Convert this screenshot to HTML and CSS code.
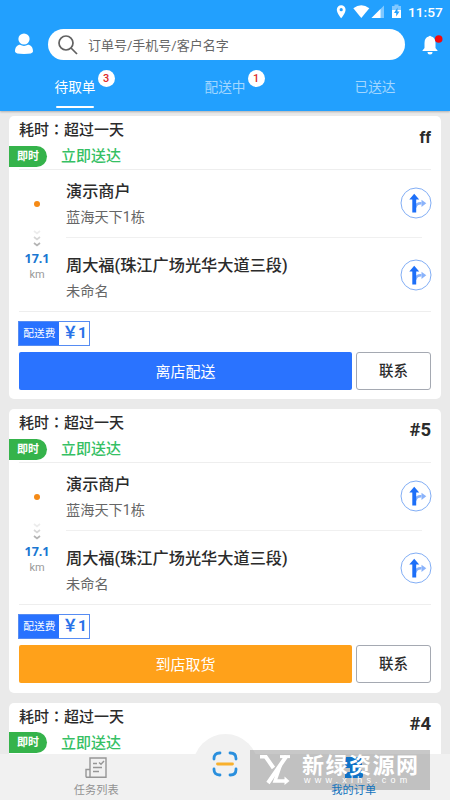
FILE: index.html
```html
<!DOCTYPE html>
<html lang="zh-CN">
<head>
<meta charset="utf-8">
<title>我的订单</title>
<link rel="stylesheet" href="styles.css">
</head>
<body>
<svg class="defs" width="0" height="0">
  <symbol id="turn" viewBox="0 0 32 32">
    <circle cx="16" cy="16" r="15" fill="#fff" stroke="#82aef5" stroke-width="1"/>
    <path d="M15 20.500C16 17.500 18 16 21.500 16.200" fill="none" stroke="#8ab3fb" stroke-width="2.600"/>
    <path d="M21.500 12.800L26.300 16.300L21.500 20Z" fill="#8ab3fb"/>
    <path d="M14.200 6.700L19.200 12.500H16.200V25.500H12.300V12.500H9.300Z" fill="#1d6ff8"/>
  </symbol>
  <symbol id="down" viewBox="0 0 8 18">
    <g fill="none" stroke-width="1.700">
      <path d="M1 1L4 3.500L7 1" stroke="#ececec"/>
      <path d="M1 7L4 9.500L7 7" stroke="#d6d6d6"/>
      <path d="M1 13L4 15.500L7 13" stroke="#b4b4b4"/>
    </g>
  </symbol>
</svg>
<div class="app">
  <header class="header">
    <div class="status">
      <svg width="68" height="16" viewBox="0 0 68 16">
        <path d="M5.200 1.300a4.400 4.400 0 0 0-4.400 4.400c0 3.300 4.400 8.500 4.400 8.500s4.400-5.200 4.400-8.500a4.400 4.400 0 0 0-4.400-4.400zm0 2.800a1.600 1.600 0 1 1 0 3.200a1.600 1.600 0 0 1 0-3.200z" fill="#fff"/>
        <path d="M17.300 4.300Q25.300-1.700 33.300 4.300L25.300 14Z" fill="#fff"/>
        <path d="M35.500 14L48 1.500V14Z" fill="#80c8ff"/><path d="M35.500 14L44.500 5V14Z" fill="#fff"/>
        <path d="M56 2h2.500V.5h4V2H65v5h-9z" fill="#80c8ff"/><path d="M56 6h9v8h-9z" fill="#fff"/><path d="M61.500 3.500L58 9h2.200v3.600L63.500 7.500h-2z" fill="#22a0fc"/>
      </svg>
      <span class="clock">11:57</span>
    </div>
    <div class="search-row">
      <svg class="user" width="18" height="22" viewBox="0 0 18 22"><circle cx="9" cy="6" r="5.600" fill="#fff"/><path d="M0 18.500C0 14 2.500 11.800 5 11.800Q9 14 13 11.800C15.500 11.800 18 14 18 18.500Q18 21 9 21T0 18.500Z" fill="#fff"/></svg>
      <div class="search">
        <svg width="20" height="20" viewBox="0 0 20 20" fill="none" stroke="#616161" stroke-width="1.700"><circle cx="8" cy="8" r="7"/><path d="M13 13L19 19"/></svg>
        <span>订单号/手机号/客户名字</span>
      </div>
      <svg class="bell" width="21" height="22" viewBox="0 0 21 22"><path d="M6.700 2.500Q8 .8 9.300 2.500Q13.500 3.700 13.500 9V14L15.500 16.500V17H.5V16.500L2.500 14V9Q2.500 3.700 6.700 2.500Z" fill="#fff"/><path d="M5.500 18h5Q10.500 20.500 8 20.500T5.500 18Z" fill="#fff"/><circle cx="16.700" cy="5" r="3.800" fill="#f4090c"/></svg>
    </div>
    <nav class="tabs">
      <div class="tab active"><span>待取单<b class="count">3</b></span></div>
      <div class="tab"><span>配送中<b class="count">1</b></span></div>
      <div class="tab"><span>已送达</span></div>
    </nav>
  </header>
  <main class="list">
    <section class="card">
      <div class="card-head">
        <div class="elapsed">耗时<i lang="zh-TW">：</i>超过一天</div>
        <div class="number small">ff</div>
        <div class="deliver"><span class="badge">即时</span><span>立即送达</span></div>
      </div>
      <div class="route">
        <div class="distance"><span class="dot"></span><svg width="8" height="18"><use href="#down"/></svg><b>17.1</b><small>km</small></div>
        <div class="stops">
          <div class="stop"><div><h3>演示商户</h3><p>蓝海天下1栋</p></div><svg class="turn" width="32" height="32"><use href="#turn"/></svg></div>
          <div class="stop second"><div><h3>周大福(珠江广场光华大道三段)</h3><p>未命名</p></div><svg class="turn" width="32" height="32"><use href="#turn"/></svg></div>
        </div>
      </div>
      <div class="fee"><span>配送费</span><b>￥1</b></div>
      <div class="actions"><div class="primary">离店配送</div><div class="contact">联系</div></div>
    </section>
    <section class="card">
      <div class="card-head">
        <div class="elapsed">耗时<i lang="zh-TW">：</i>超过一天</div>
        <div class="number">#5</div>
        <div class="deliver"><span class="badge">即时</span><span>立即送达</span></div>
      </div>
      <div class="route">
        <div class="distance"><span class="dot"></span><svg width="8" height="18"><use href="#down"/></svg><b>17.1</b><small>km</small></div>
        <div class="stops">
          <div class="stop"><div><h3>演示商户</h3><p>蓝海天下1栋</p></div><svg class="turn" width="32" height="32"><use href="#turn"/></svg></div>
          <div class="stop second"><div><h3>周大福(珠江广场光华大道三段)</h3><p>未命名</p></div><svg class="turn" width="32" height="32"><use href="#turn"/></svg></div>
        </div>
      </div>
      <div class="fee"><span>配送费</span><b>￥1</b></div>
      <div class="actions"><div class="primary pickup">到店取货</div><div class="contact">联系</div></div>
    </section>
    <section class="card">
      <div class="card-head">
        <div class="elapsed">耗时<i lang="zh-TW">：</i>超过一天</div>
        <div class="number">#4</div>
        <div class="deliver"><span class="badge">即时</span><span>立即送达</span></div>
      </div>
    </section>
  </main>
  <footer class="bottom">
    <div class="nav-item">
      <svg width="22" height="22" viewBox="0 0 22 22" fill="none" stroke="#969696" stroke-width="1.400"><path d="M5 20.300V1H21V20.300H2Q1 20.300 1 19V12.500H5"/><path d="M8 6.500H12M8 10.500H17M8 14.500H14M14 5.500L16 7.300L19 4"/></svg>
      <span>任务列表</span>
    </div>
    <div class="nav-item scan">
      <svg width="26" height="26" viewBox="0 0 26 26" fill="none" stroke-width="2.800" stroke-linecap="round"><path d="M2 8V7.500Q2 2 7.500 2H8M18 2H18.500Q24 2 24 7.500V8M24 18V18.500Q24 24 18.500 24H18M8 24H7.500Q2 24 2 18.500V18" stroke="#2a8fdd"/><path d="M5.500 13H20.500" stroke="#f8b02c"/></svg>
    </div>
    <div class="nav-item current">
      <svg width="22" height="22" viewBox="0 0 22 22"><path d="M3 0H15Q19 0 19 4V8L17 11L20 15V19Q20 21 18 21H2V15H7V11H2V2Z" fill="#0f72c6"/></svg>
      <span>我的订单</span>
    </div>
  </footer>
  <div class="watermark">
    <svg width="30" height="30" viewBox="0 0 30 30" fill="none" stroke="#fff"><path d="M0 1.500H5.500L13.500 13M26.500 1L8 28" stroke-width="4"/><path d="M20.500 10L15 26H26" stroke-width="3.400"/><path d="M24.500 21.500L29.500 26L24.500 30Z" fill="#fff" stroke="none"/><path d="M20 1.600H30" stroke-width="3"/></svg>
    <div class="mark-text"><b>新绿资源网</b><span>www.xlhs.com</span></div>
  </div>
</div>
</body>
</html>
```
FILE: styles.css
```css
* { box-sizing: border-box; }
body { margin: 0; font-family: Roboto, "Noto Sans CJK SC", sans-serif; color: #2b2b2b; }
h3, p { margin: 0; }
svg { display: block; flex: none; }
.defs { position: absolute; }
.app { position: relative; width: 450px; height: 800px; overflow: hidden; background: #eaeaea; display: flex; flex-direction: column; }
.header { height: 111px; flex: none; background: #22a0fe; box-shadow: 0 1px 2px rgba(0,0,0,.25); color: #fff; }
.status { height: 24px; padding: 4px 8px 0 0; display: flex; justify-content: flex-end; gap: 4px; }
.clock { font-size: 13.700px; line-height: 17px; font-weight: 500; width: 34px; white-space: nowrap; }
.search-row { display: flex; align-items: center; height: 41px; padding: 0 7px 0 15px; }
.search { margin: 0 17px 0 15px; width: 357px; height: 31px; border-radius: 16px; background: #fff; display: flex; align-items: center; padding-left: 10px; gap: 10px; color: #666; font-size: 13px; }
.user { margin-top: -1px; }
.tabs { display: grid; grid-template-columns: repeat(3, 1fr); height: 46px; font-size: 13.700px; text-align: center; }
.tab { color: #a3d7ff; line-height: 20px; padding-top: 12px; }
.tab > span { position: relative; display: inline-block; height: 31px; }
.active { color: #fff; }
.active > span::after { content: ""; position: absolute; left: 2px; right: 2px; bottom: 0; height: 2px; border-radius: 1px; background: #fff; }
.count { position: absolute; right: -19px; top: -7px; width: 17px; height: 17px; border-radius: 50%; background: #fff; color: #dd2a2a; font-size: 11px; font-weight: 500; line-height: 17px; }
.list { flex: 1; min-height: 0; padding: 5px 9px 0; display: flex; flex-direction: column; gap: 10px; overflow: hidden; }
.card { flex: none; height: 283.400px; border-radius: 5px; background: #fff; padding: 0 10px; }
.card-head { height: 53px; display: grid; grid-template-columns: 1fr auto; grid-template-rows: 27px 26px; }
.elapsed { font-size: 15px; line-height: 25px; font-weight: 500; }
.elapsed i { font-style: normal; font-family: "Noto Sans CJK TC", sans-serif; }
.number { grid-column: 2; grid-row: 1 / 3; font-size: 18.500px; font-weight: 700; line-height: 43px; }
.small { font-size: 16px; }
.deliver { grid-row: 2; margin-left: -10px; display: flex; align-items: center; gap: 14px; color: #35c064; font-size: 15px; font-weight: 500; line-height: 24px; }
.badge { width: 38px; height: 21px; border-radius: 0 11px 11px 0; background: #35b34b; color: #fff; font-size: 11px; line-height: 21px; font-weight: 700; padding-left: 8px; }
.route { height: 143px; border-top: 1px solid #eee; border-bottom: 1px solid #eee; display: flex; margin-bottom: 9px; }
.distance { width: 36px; flex: none; display: flex; flex-direction: column; align-items: center; padding-top: 31px; }
.dot { width: 6px; height: 6px; border-radius: 50%; background: #f58a16; margin-bottom: 23px; }
.distance b { font: 700 12.500px/15px "Noto Sans", sans-serif; color: #1977d2; margin-top: 3px; }
.distance small { font-size: 11px; line-height: 14px; color: #999; margin-top: 2px; }
.stops { flex: 1; margin-left: 11px; }
.stop { height: 68px; position: relative; display: flex; justify-content: space-between; padding-top: 9px; }
.stop::after { content: ""; position: absolute; left: 0; right: 9px; bottom: 0; height: 1px; background: #f0f0f0; }
.second { padding-top: 15px; height: 73px; }
.second::after { display: none; }
.stop h3 { font-size: 16.200px; line-height: 26px; font-weight: 500; white-space: nowrap; }
.stop p { font-size: 14.200px; line-height: 24px; color: #666; }
.turn { margin-top: 8px; margin-right: -1px; }
.second .turn { margin-top: 6px; }
.fee { width: 72px; height: 25px; border: 1px solid #568cf3; display: flex; margin-left: -.6px; }
.fee span { width: 40px; background: #2872ff; color: #fff; font-size: 10.700px; line-height: 23px; text-align: center; flex: none; }
.fee b { flex: 1; color: #2872e8; font-weight: 700; font-size: 15.500px; line-height: 23px; padding-left: 3px; white-space: nowrap; }
.actions { display: flex; gap: 4px; margin-top: 6px; font-size: 15px; line-height: 40px; text-align: center; }
.primary { width: 333px; height: 38px; border-radius: 2px; background: #2a73ff; color: #fff; }
.pickup { background: #ffa11a; }
.contact { flex: 1; height: 38px; border: 1px solid #a5a9b2; border-radius: 3px; line-height: 38px; font-size: 14.500px; font-weight: 500; }
.bottom { position: absolute; left: 0; right: 0; bottom: 0; height: 46px; background: #f1f1f1; display: flex; justify-content: center; }
.nav-item { width: 193px; display: flex; flex-direction: column; align-items: center; padding-top: 3px; font-size: 11.200px; color: #919191; line-height: 12px; gap: 6px; }
.scan { position: relative; width: 65px; height: 65px; margin-top: -20px; border-radius: 50%; background: #f1f1f1; padding-top: 17px; flex: none; }
.current { color: #1273bd; position: relative; z-index: 2; }
.watermark { position: absolute; left: 250px; top: 750px; width: 180px; height: 40px; display: flex; color: #fff; padding: 5px 0 0 10px; gap: 12px; }
.watermark::before { content: ""; position: absolute; inset: 0; background: rgba(145,145,145,.5); z-index: 1; }
.watermark > * { position: relative; z-index: 3; }
.mark-text { display: flex; flex-direction: column; }
.mark-text b { font-size: 22px; line-height: 21px; letter-spacing: 1.500px; white-space: nowrap; }
.mark-text span { font: 9px/8px "Liberation Sans", sans-serif; letter-spacing: 4.200px; white-space: nowrap; padding-left: 2px; }
```
